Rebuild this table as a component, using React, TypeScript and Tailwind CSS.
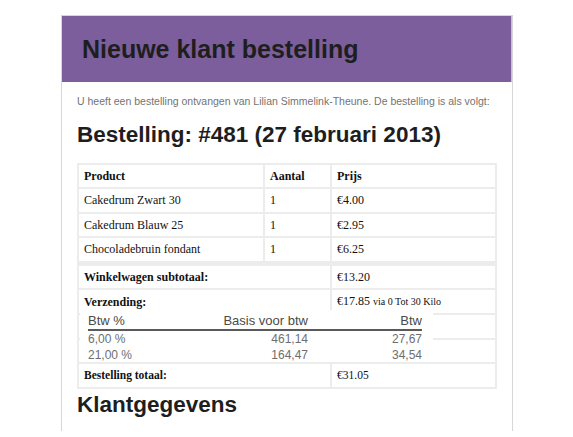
import type { ReactElement } from "react";

const items = [
  { name: "Cakedrum Zwart 30", qty: 1, price: "€4.00" },
  { name: "Cakedrum Blauw 25", qty: 1, price: "€2.95" },
  { name: "Chocoladebruin fondant", qty: 1, price: "€6.25" },
];

const vatRows = [
  { rate: "6,00 %", base: "461,14", vat: "27,67" },
  { rate: "21,00 %", base: "164,47", vat: "34,54" },
];

const cell = "border border-[#ececec] px-[5px] py-[4px] leading-[14.4px] align-middle text-left";

const VatOverlay = (): ReactElement => (
  <div className="absolute left-[3px] top-[147px] h-[52px] w-[353px] bg-white pl-[8px] font-['Liberation_Sans',Arial,sans-serif] text-[12px]">
    <div className="grid w-[334px] grid-cols-[120px_100px_114px] border-b-2 border-[#5a5a5a] pt-[3px] text-[13px] leading-[16px] text-[#4a4a4a]">
      <span>Btw %</span>
      <span className="text-right">Basis voor btw</span>
      <span className="text-right">Btw</span>
    </div>
    {vatRows.map((row) => (
      <div key={row.rate} className="grid w-[334px] grid-cols-[120px_100px_114px] leading-[16px] text-[#6e6e6e]">
        <span>{row.rate}</span>
        <span className="text-right">{row.base}</span>
        <span className="text-right">{row.vat}</span>
      </div>
    ))}
  </div>
);

const App = (): ReactElement => {
  return (
    <div className="h-[437px] w-[573px] bg-white pl-[61px] pt-[15px]">
      <div className="h-[416px] w-[452px] overflow-hidden border-x border-t border-[#d6d6d6]">
        <div className="flex h-[66px] items-center border-r border-[#c9bfd8] bg-[#7b5e9b] pl-[20px]">
          <h1 className="font-['Liberation_Sans',Arial,sans-serif] text-[25px] font-bold leading-[30px] text-[#1e1e1e]">
            Nieuwe klant bestelling
          </h1>
        </div>

        <div className="px-[15px] pt-[13px]">
          <p className="whitespace-nowrap font-['Liberation_Sans',Arial,sans-serif] text-[10.5px] leading-[13px] text-[#737373]">
            U heeft een bestelling ontvangen van Lilian Simmelink-Theune. De bestelling is als volgt:
          </p>

          <h2 className="mt-[14px] font-['Liberation_Sans',Arial,sans-serif] text-[22.5px] font-bold leading-[26px] text-[#1e1e1e]">
            Bestelling: #481 (27 februari 2013)
          </h2>

          <div className="relative mt-[15px]">
            <table className="w-[420px] table-fixed border-separate border-spacing-0 border border-[#ececec] font-['Liberation_Serif','Times_New_Roman',serif] text-[12px] text-[#111]">
              <colgroup>
                <col className="w-[186px]" />
                <col className="w-[67px]" />
                <col />
              </colgroup>
              <thead>
                <tr>
                  <th className={`${cell} font-bold`}>Product</th>
                  <th className={`${cell} font-bold`}>Aantal</th>
                  <th className={`${cell} font-bold`}>Prijs</th>
                </tr>
              </thead>
              <tbody>
                {items.map((item) => (
                  <tr key={item.name}>
                    <td className={cell}>{item.name}</td>
                    <td className={cell}>{item.qty}</td>
                    <td className={cell}>{item.price}</td>
                  </tr>
                ))}
              </tbody>
              <tfoot>
                <tr>
                  <th colSpan={2} className={`${cell} border-t-4 font-bold`}>
                    Winkelwagen subtotaal:
                  </th>
                  <td className={`${cell} border-t-4`}>€13.20</td>
                </tr>
                <tr>
                  <th colSpan={2} className={`${cell} font-bold`}>
                    Verzending:
                  </th>
                  <td className={cell}>
                    €17.85 <span className="text-[10px]">via 0 Tot 30 Kilo</span>
                  </td>
                </tr>
                <tr>
                  <td colSpan={2} className={cell}>&nbsp;</td>
                  <td className={cell}>&nbsp;</td>
                </tr>
                <tr>
                  <td colSpan={2} className={cell}>&nbsp;</td>
                  <td className={cell}>&nbsp;</td>
                </tr>
                <tr>
                  <th colSpan={2} className={`${cell} text-[11.5px] font-bold`}>
                    Bestelling totaal:
                  </th>
                  <td className={`${cell} text-[11.5px]`}>€31.05</td>
                </tr>
              </tfoot>
            </table>
            <VatOverlay />
          </div>

          <h2 className="mt-[3px] font-['Liberation_Sans',Arial,sans-serif] text-[22.5px] font-bold leading-[26px] text-[#1e1e1e]">
            Klantgegevens
          </h2>
        </div>
      </div>
    </div>
  );
};

export default App;
